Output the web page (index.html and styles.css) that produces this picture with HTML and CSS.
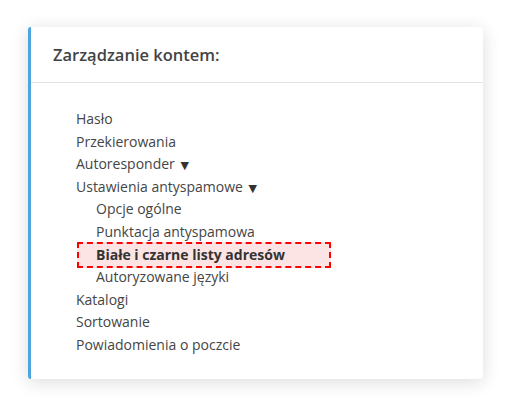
FILE: index.html
```html
<!DOCTYPE html>
<html lang="pl">
<head>
  <meta charset="UTF-8" />
  <title>Zarządzanie kontem</title>
  <link rel="stylesheet" href="styles.css">
</head>
<body>
  <div class="panel">
    <div class="panel-header">
      <h3>Zarządzanie kontem:</h3>
    </div>
    <div class="panel-body">
      <ul class="menu">
        <li><a href="#">Hasło</a></li>
        <li><a href="#">Przekierowania</a></li>
        <li><a href="#">Autoresponder <span class="caret">▼</span></a></li>
        <li>
          <a href="#">Ustawienia antyspamowe <span class="caret">▼</span></a>
          <ul class="submenu">
            <li><a href="#">Opcje ogólne</a></li>
            <li><a href="#">Punktacja antyspamowa</a></li>
            <li class="active"><a href="#">Białe i czarne listy adresów</a></li>
            <li><a href="#">Autoryzowane języki</a></li>
          </ul>
        </li>
        <li><a href="#">Katalogi</a></li>
        <li><a href="#">Sortowanie</a></li>
        <li><a href="#">Powiadomienia o poczcie</a></li>
      </ul>
    </div>
  </div>
</body>
</html>
```

FILE: styles.css
```css
* {
  margin: 0;
  padding: 0;
  box-sizing: border-box;
}

body {
  font-family: "Open Sans", "Noto Sans", sans-serif;
  background-color: #fff;
  padding: 27px 28px;
}

.panel {
  width: 455px;
  background: white;
  border-left: 3px solid #4ca5df;
  border-radius: 3px;
  box-shadow: 0 3px 18px rgba(0, 0, 0, 0.14);
}

.panel-header {
  height: 56px;
  padding: 0 22px;
  display: flex;
  align-items: center;
  border-bottom: 1px solid #e2e2e8;
}

.panel-header h3 {
  font-size: 16.5px;
  font-weight: 600;
  color: #444;
}

.panel-body {
  padding: 25px 45px 22px;
}

.menu,
.submenu {
  list-style: none;
}

.menu li {
  line-height: 22.6px;
  font-size: 14px;
}

.menu a {
  color: #454545;
  text-decoration: none;
}

.caret {
  font-family: "DejaVu Sans", sans-serif;
  font-size: 11px;
  line-height: 0;
  margin-left: 2px;
  color: #333;
}

.submenu {
  padding-left: 20px;
}

.submenu li.active {
  width: 254px;
  margin: -2px 0 -2px -19px;
  padding-left: 17px;
  border: 2px dashed #f00;
  background-color: #fde4e4;
}

.submenu li.active a {
  font-weight: 700;
  color: #333;
}
```
